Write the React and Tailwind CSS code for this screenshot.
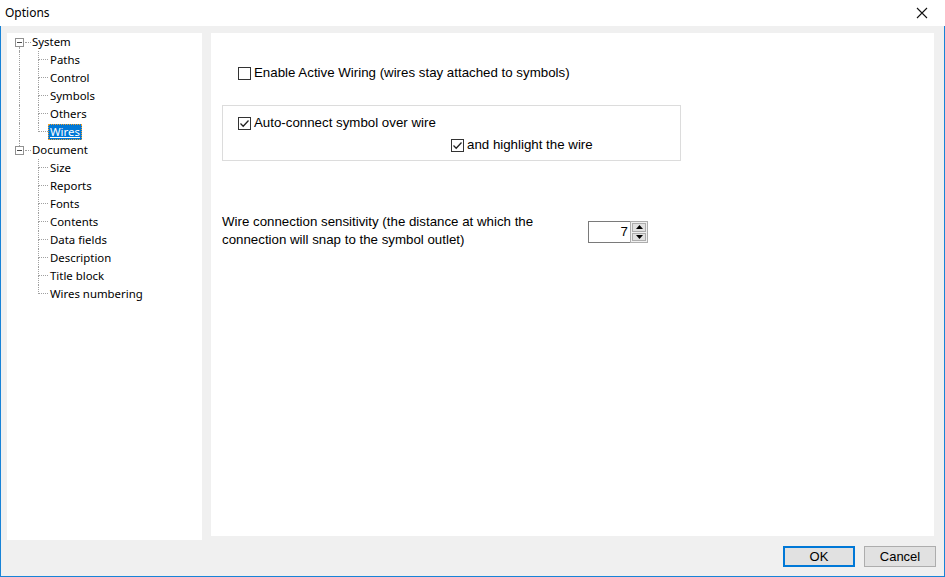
import React from "react";

const UI = { fontFamily: '"Noto Sans", "Liberation Sans", Arial, sans-serif' };
const SANS = { fontFamily: '"Liberation Sans", Arial, sans-serif' };

function CheckBox({ checked }) {
  return (
    <span className="w-[13px] h-[13px] border border-[#333333] bg-white flex items-center justify-center shrink-0">
      {checked && (
        <svg width="11" height="11" viewBox="0 0 11 11">
          <path d="M1.5 5.5 L4.2 8.2 L9.5 2.5" fill="none" stroke="#222" strokeWidth="1.3" />
        </svg>
      )}
    </span>
  );
}

function Expander({ hasAbove, hasBelow }) {
  return (
    <div className="w-[9px] h-[18px] flex flex-col items-center shrink-0">
      <div className={"h-[5px] w-0 " + (hasAbove ? "border-l border-dotted border-[#a0a0a0]" : "")} />
      <div className="w-[9px] h-[9px] border border-[#919191] bg-white flex items-center justify-center">
        <div className="w-[5px] h-px bg-[#4a4a4a]" />
      </div>
      <div className={"flex-1 w-0 " + (hasBelow ? "border-l border-dotted border-[#a0a0a0]" : "")} />
    </div>
  );
}

function ParentRow({ label, first, last }) {
  return (
    <div className="flex h-[18px] items-center pl-[8px]">
      <Expander hasAbove={!first} hasBelow={!last} />
      <div className="w-[6px] border-t border-dotted border-[#a0a0a0] ml-px" />
      <span className="ml-px leading-[18px]">{label}</span>
    </div>
  );
}

function ChildRow({ label, outer, last, selected }) {
  return (
    <div className="flex h-[18px] items-stretch">
      <div className="w-[12px] shrink-0" />
      <div className={"w-[19px] shrink-0 " + (outer ? "border-l border-dotted border-[#a0a0a0]" : "")} />
      <div className="w-[10px] shrink-0 flex flex-col">
        <div className="h-[9px] border-l border-b border-dotted border-[#a0a0a0]" />
        <div className={"flex-1 " + (last ? "" : "border-l border-dotted border-[#a0a0a0]")} />
      </div>
      {selected ? (
        <span className="my-px px-[1px] bg-[#0078d7] text-white underline leading-[14px] border border-dotted border-[#f0a030] flex items-center">
          {label}
        </span>
      ) : (
        <span className="px-[2px] leading-[18px]">{label}</span>
      )}
    </div>
  );
}

export default function App() {
  const sys = ["Paths", "Control", "Symbols", "Others", "Wires"];
  const doc = ["Size", "Reports", "Fonts", "Contents", "Data fields", "Description", "Title block", "Wires numbering"];
  return (
    <div className="w-[945px] h-[577px] flex flex-col bg-[#f0f0f0] text-black text-[11.4px] overflow-hidden" style={UI}>
      <div className="h-[26px] bg-white flex items-center justify-between shrink-0">
        <span className="pl-[5px] text-[12px]">Options</span>
        <div className="w-[46px] h-[26px] flex items-center justify-center">
          <svg width="12" height="12" viewBox="0 0 12 12">
            <path d="M1 1 L11 11 M11 1 L1 11" stroke="#111" strokeWidth="1.1" fill="none" />
          </svg>
        </div>
      </div>
      <div className="flex-1 flex flex-col border-l border-r border-b border-[#1883d7] pt-[7px] pl-[6px] pr-[9px]">
        <div className="flex items-start gap-[9px]">
          <div className="w-[195px] h-[507px] bg-white">
            <ParentRow label="System" first />
            {sys.map((s, i) => (
              <ChildRow key={s} label={s} outer last={i === sys.length - 1} selected={s === "Wires"} />
            ))}
            <ParentRow label="Document" last />
            {doc.map((s, i) => (
              <ChildRow key={s} label={s} last={i === doc.length - 1} />
            ))}
          </div>
          <div className="w-[723px] h-[503px] bg-white pl-[11px] flex flex-col text-[13.3px]" style={SANS}>
            <div className="ml-[16px] mt-[31px] h-[18px] flex items-center gap-[3px]">
              <CheckBox />
              <span>Enable Active Wiring (wires stay attached to symbols)</span>
            </div>
            <div className="mt-[23px] w-[459px] h-[56px] border border-[#dcdcdc] flex flex-col pt-[8px]">
              <div className="pl-[15px] h-[18px] flex items-center gap-[3px]">
                <CheckBox checked />
                <span>Auto-connect symbol over wire</span>
              </div>
              <div className="pl-[228px] mt-[4px] h-[18px] flex items-center gap-[3px]">
                <CheckBox checked />
                <span>and highlight the wire</span>
              </div>
            </div>
            <div className="mt-[52px] flex items-start">
              <div className="w-[366px] leading-[18px]">
                Wire connection sensitivity (the distance at which the
                <br />
                connection will snap to the symbol outlet)
              </div>
              <div className="mt-[8px] flex h-[22px]">
                <div className="w-[42px] border-y border-l border-[#7a7a7a] flex items-center justify-end pr-[2px]">7</div>
                <div className="w-[18px] border border-[#adadad] bg-[#f0f0f0] flex flex-col p-px gap-px">
                  <div className="flex-1 bg-[#e1e1e1] border border-[#adadad] flex items-center justify-center">
                    <svg width="7" height="4" viewBox="0 0 7 4"><path d="M0 4 L3.5 0 L7 4 Z" fill="#000" /></svg>
                  </div>
                  <div className="flex-1 bg-[#e1e1e1] border border-[#adadad] flex items-center justify-center">
                    <svg width="7" height="4" viewBox="0 0 7 4"><path d="M0 0 L3.5 4 L7 0 Z" fill="#000" /></svg>
                  </div>
                </div>
              </div>
            </div>
          </div>
        </div>
        <div className="mt-[6px] flex justify-end gap-[9px] -mr-px text-[13px]" style={SANS}>
          <button className="w-[72px] h-[21px] bg-[#e1e1e1] border-2 border-[#0078d7] flex items-center justify-center">OK</button>
          <button className="w-[72px] h-[21px] bg-[#e1e1e1] border border-[#adadad] flex items-center justify-center">Cancel</button>
        </div>
      </div>
    </div>
  );
}
